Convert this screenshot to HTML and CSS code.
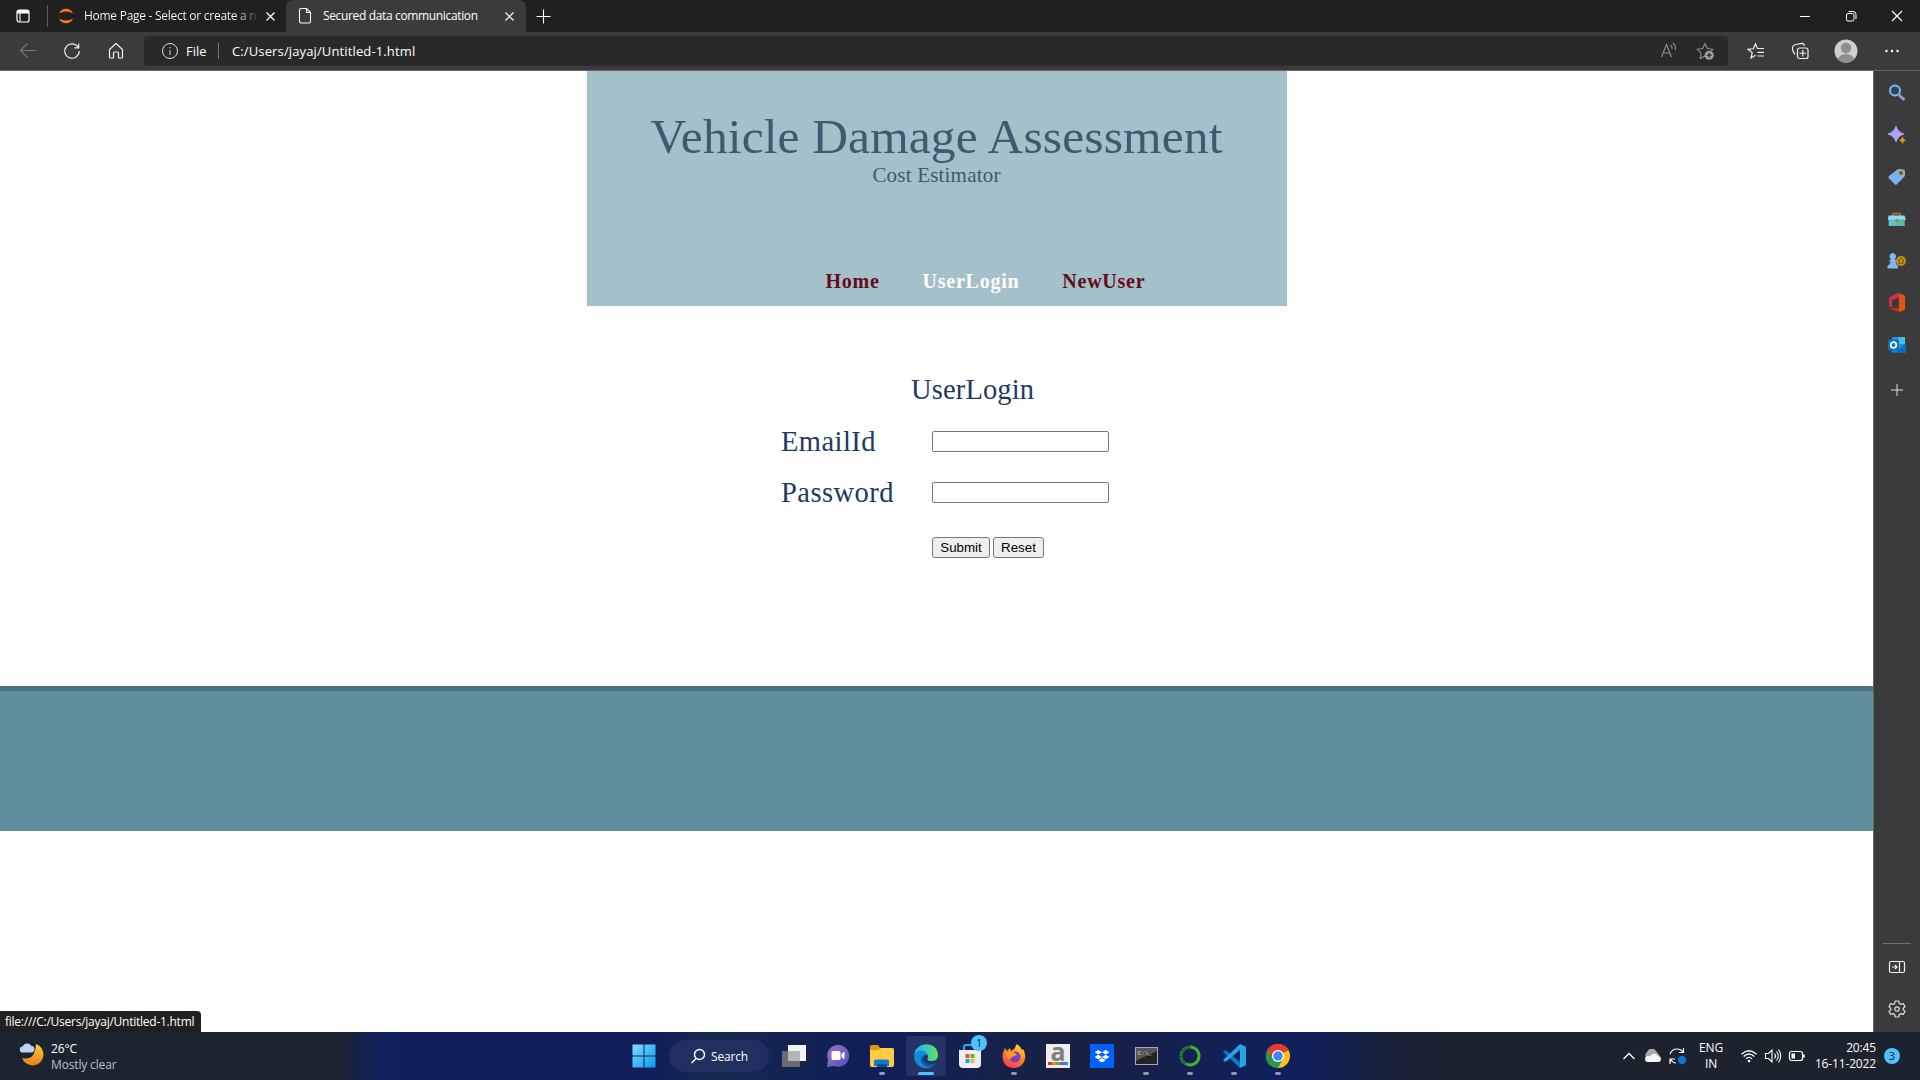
FILE: index.html
```html
<!DOCTYPE html>
<html lang="en">
<head>
<meta charset="utf-8">
<title>Secured data communication</title>
<link rel="stylesheet" href="styles.css">
</head>
<body>
<header class="tabs">
  <div class="tab-actions"><svg width="16" height="16" viewBox="0 0 16 16"><rect x="1" y="2" width="12" height="12" rx="2" fill="none" stroke="#fff" stroke-width="1.200"/><path d="M1 5.500V4q0-2 2-2h8q2 0 2 2v1.500z" fill="#fff"/><path d="M4 5v9" stroke="#fff"/></svg></div>
  <div class="tab tab-first">
    <svg width="18" height="18" viewBox="0 0 18 18"><path d="M2 6.500Q4 1.800 9 1.800T16 6.500Q9 2.500 2 6.500M2 11.500Q4 16.200 9 16.200T16 11.500Q9 15.500 2 11.500" fill="#f37726"/></svg>
    <span class="tab-title faded">Home Page - Select or create a n</span>
    <svg class="close" width="9" height="9" viewBox="0 0 9 9"><path d="M.5.5l8 8M8.500.5l-8 8" stroke="#fff" stroke-width="1.200"/></svg>
  </div>
  <div class="tab tab-active">
    <svg width="14" height="18" viewBox="0 0 14 18"><path d="M3 1.500h5.500L12.500 5.500V14.500q0 1.500-1.500 1.500H3q-1.500 0-1.500-1.500V3q0-1.500 1.500-1.500zM8.500 1.500v4h4" fill="none" stroke="#fff" stroke-width="1.100"/></svg>
    <span class="tab-title active-title">Secured data communication</span>
    <svg class="close" width="9" height="9" viewBox="0 0 9 9"><path d="M.5.5l8 8M8.500.5l-8 8" stroke="#fff" stroke-width="1.200"/></svg>
  </div>
  <svg class="new-tab" width="15" height="15" viewBox="0 0 15 15"><path d="M7.500.5v14M.5 7.500h14" stroke="#fff" stroke-width="1.100"/></svg>
  <div class="window-buttons">
    <svg width="12" height="12" viewBox="0 0 12 12"><path d="M1 6.500h10" stroke="#fff"/></svg>
    <svg width="12" height="12" viewBox="0 0 12 12"><rect x="1.500" y="3.500" width="7.500" height="7.500" rx="1.500" fill="none" stroke="#fff"/><path d="M3.500 1.500H8q3 0 3 3V9" fill="none" stroke="#fff"/></svg>
    <svg width="12" height="12" viewBox="0 0 12 12"><path d="M1 1l10 10M11 1L1 11" stroke="#fff" stroke-width="1.200"/></svg>
  </div>
</header>
<nav class="toolbar">
  <div class="nav-buttons">
    <svg width="18" height="18" viewBox="0 0 18 18"><path d="M17 8.500H2M8.500 1.500l-7 7 7 7" fill="none" stroke="#777" stroke-width="1.100"/></svg>
    <svg width="18" height="18" viewBox="0 0 18 18"><path d="M15.300 5.500A7.200 7.200 0 1 0 16.200 9M15.700 1.500v4.300h-4.300" fill="none" stroke="#eee" stroke-width="1.200"/></svg>
    <svg width="18" height="18" viewBox="0 0 18 18"><path d="M2.500 7.500L9 1.500l6.500 6v7.500q0 1-1 1h-3v-5q0-1-1-1h-3q-1 0-1 1v5h-3q-1 0-1-1z" fill="none" stroke="#eee" stroke-width="1.200" stroke-linejoin="round"/></svg>
  </div>
  <div class="address">
    <svg width="18" height="18" viewBox="0 0 18 18"><circle cx="9" cy="9" r="7.500" fill="none" stroke="#ddd"/><path d="M9 8v5M9 5v1.400" stroke="#ddd"/></svg>
    <span class="scheme">File</span><i class="address-line"></i><span class="url">C:/Users/jayaj/Untitled-1.html</span>
    <div class="address-icons">
      <svg width="18" height="18" viewBox="0 0 18 18"><path d="M1.500 15L6.500 2.500 11.500 15M3 11h7M10.500 3q2 1.500 1.500 4M12.800 1q3.200 2.500 2.500 7" fill="none" stroke="#929292" stroke-width="1.100"/></svg>
      <svg width="18" height="18" viewBox="0 0 18 18"><path d="M9 14l-4.800 2.500 1-5.300L1.300 7.300l5.300-.7L9 1.800l2.400 4.800 5.300.7-1.500 1.500" fill="none" stroke="#929292" stroke-width="1.100"/><circle cx="13.200" cy="13.200" r="4.500" fill="#a0a0a0"/><path d="M13.200 10.700v5M10.700 13.200h5" stroke="#292929" stroke-width="1.200"/></svg>
    </div>
  </div>
  <svg class="favorites" width="18" height="18" viewBox="0 0 18 18"><path d="M8.500 13.200L4 16l1.200-5.200L1 7.300l5.300-.5L8.500 1.800l2 4.700h6.500M10.500 10.300H17M10.500 14H17" fill="none" stroke="#eee" stroke-width="1.200"/></svg>
  <svg class="collections" width="18" height="18" viewBox="0 0 18 18"><rect x="6.500" y="6" width="10.500" height="10.500" rx="2" fill="none" stroke="#eee" stroke-width="1.200"/><path d="M11.750 8v6.500M8.500 11.250H15M4 12.500Q1 8 1.500 5.500T5 2.500l6-1.200q2 0 2.500 2.500" fill="none" stroke="#eee" stroke-width="1.200"/></svg>
  <svg class="profile" width="24" height="24" viewBox="0 0 24 24"><clipPath id="face"><circle cx="12" cy="12" r="11.500"/></clipPath><g clip-path="url(#face)"><path fill="#d0cecc" d="M0 0h24v24H0z"/><circle cx="12" cy="9" r="5.200" fill="#918d8a"/><ellipse cx="12" cy="21" rx="8.200" ry="6" fill="#918d8a"/></g></svg>
  <svg class="more" width="16" height="4" viewBox="0 0 16 4"><g fill="#fff"><circle cx="2.500" cy="2" r="1.200"/><circle cx="8" cy="2" r="1.200"/><circle cx="13.500" cy="2" r="1.200"/></g></svg>
</nav>
<div class="workspace">
  <main class="page">
    <header class="banner">
      <h1>Vehicle Damage Assessment</h1>
      <p>Cost Estimator</p>
      <nav class="menu"><a>Home</a><a class="current">UserLogin</a><a>NewUser</a></nav>
    </header>
    <form class="login">
      <h2>UserLogin</h2>
      <label for="email">EmailId</label><input id="email" type="text">
      <label for="pass">Password</label><input id="pass" type="password">
      <div class="form-buttons"><button class="submit" type="button">Submit</button><button class="reset" type="button">Reset</button></div>
    </form>
    <footer class="page-footer"></footer>
    <div class="status">file:///C:/Users/jayaj/Untitled-1.html</div>
  </main>
  <aside class="sidebar">
    <svg width="20" height="20" viewBox="0 0 20 20"><path d="M12 12l5.500 5" stroke="#b38ddd" stroke-width="3"/><circle cx="8" cy="7.500" r="5" fill="#344354" stroke="#79b8f5" stroke-width="2"/></svg>
    <svg width="20" height="20" viewBox="0 0 20 20"><defs><linearGradient id="spark"><stop stop-color="#8bb9ff"/><stop offset="1" stop-color="#d28bea"/></linearGradient></defs><path d="M9 1q1.800 6.200 8 8-6.200 1.800-8 8-1.800-6.200-8-8 6.200-1.800 8-8z" fill="url(#spark)" stroke="url(#spark)" stroke-width=".8" stroke-linejoin="round"/><path d="M15.500 11.500q.9 2.900 3.500 3.800-2.600.8-3.500 3.700-.9-2.900-3.500-3.700 2.600-.9 3.500-3.800z" fill="#d89b17"/></svg>
    <svg width="20" height="20" viewBox="0 0 20 20"><path d="M2 9l8-6.200q1-.8 2-.7l4.500.4q1.500.2 1.500 1.700V8q0 1-.7 1.800L10 17.200q-1.200 1-2.300 0L2 11.500Q.8 10 2 9z" fill="#79b2f1"/><circle cx="14" cy="6" r="1.800" fill="#4b432f" stroke="#c47b16" stroke-width="1.300"/></svg>
    <svg width="20" height="20" viewBox="0 0 20 20"><defs><linearGradient id="box"><stop stop-color="#55c9e3"/><stop offset="1" stop-color="#56bd8e"/></linearGradient></defs><path d="M6 7V4.500h7V7" fill="none" stroke="#af7b15" stroke-width="1.600"/><path d="M1.500 6.500h16L19 11H1z" fill="#8dd9ff"/><path d="M1.700 10.500h16V17h-16z" fill="url(#box)"/><circle cx="10" cy="11.500" r="1.800" fill="#bd861a"/></svg>
    <svg width="20" height="20" viewBox="0 0 20 20"><circle cx="14" cy="10" r="5" fill="#c88c1b"/><g fill="#624612"><circle cx="14" cy="7.500" r=".9"/><circle cx="11.700" cy="9.500" r=".9"/><circle cx="16.300" cy="9.500" r=".9"/><circle cx="12.700" cy="12" r=".9"/><circle cx="15.500" cy="12" r=".9"/></g><path d="M2.500 9H4L3 7a3.200 3.200 0 1 1 5.500 0L8 9h1.500v1.500H8.500l1 3L11 15v2.500H.5V15L2.500 13.500l1-3h-1z" fill="#80b7ed"/></svg>
    <svg width="20" height="22" viewBox="0 0 20 22"><path d="M11 1L3.500 4.500Q2 5.300 2 7v7l3 2V8l7-2.500z" fill="#d02f50"/><path d="M11 1l6 2q1 .5 1 1.500v12q0 1.200-1 1.700L12 20V5z" fill="#e7530c"/><path d="M3 17l2-1 7 .5V20z" fill="#c92c18"/></svg>
    <svg width="20" height="20" viewBox="0 0 20 20"><path d="M5 2h13v15H5z" fill="#1f91de"/><path d="M11 2h7v7h-7z" fill="#4abbed"/><path d="M4 16l14-7v8.500H5z" fill="#1786d7"/><path d="M19 9v9H8z" fill="#0c6cb5"/><rect x="1" y="4.500" width="11" height="11" rx="1" fill="#0872c6"/><circle cx="6.500" cy="10" r="2.800" fill="none" stroke="#fff" stroke-width="1.700"/></svg>
    <svg class="add" width="14" height="14" viewBox="0 0 14 14"><path d="M7 1v12M1 7h12" stroke="#ddd"/></svg>
    <div class="sidebar-end">
      <svg width="18" height="14" viewBox="0 0 18 14"><rect x="1.500" y="1.500" width="15" height="11" rx="1.500" fill="none" stroke="#eee" stroke-width="1.200"/><path d="M11.500 1v12M4 7h5M7 5l2 2-2 2" fill="none" stroke="#eee" stroke-width="1.200"/></svg>
      <svg width="18" height="18" viewBox="0 0 18 18"><path d="M7.300 1h3.400l.7 2.600 1.300.7 2.600-.7L17 6.500l-1.800 1.800v1.400L17 11.500l-1.700 2.900-2.600-.7-1.300.7-.7 2.600H7.300l-.7-2.600-1.300-.7-2.600.7L1 11.500l1.800-1.800V8.300L1 6.500l1.700-2.900 2.600.7 1.300-.7z" fill="none" stroke="#ddd" stroke-width="1.200" stroke-linejoin="round"/><circle cx="9" cy="9" r="2.200" fill="none" stroke="#ddd" stroke-width="1.200"/></svg>
    </div>
  </aside>
</div>
<footer class="taskbar">
  <div class="weather">
    <svg width="26" height="26" viewBox="0 0 26 26"><defs><linearGradient id="moon" x2="0" y2="1"><stop stop-color="#ffd136"/><stop offset="1" stop-color="#ef7c1c"/></linearGradient></defs><path d="M17 2a11 11 0 1 1-14 14Q11 18 14.500 12.500 17 8 17 2z" fill="url(#moon)"/><path d="M4 10.500a3 3 0 0 1-.4-6A5 5 0 0 1 12.500 4a3.300 3.300 0 0 1 .5 6.500z" fill="#bfd1f4"/></svg>
    <div><b>26°C</b><span>Mostly clear</span></div>
  </div>
  <div class="apps">
    <div class="app start"><svg width="24" height="24" viewBox="0 0 24 24"><defs><linearGradient id="win" x2="1" y2="1"><stop stop-color="#80ddff"/><stop offset="1" stop-color="#0798ed"/></linearGradient></defs><path d="M.5.5h11v11H.5zM12.500.5h11v11h-11zM.5 12.500h11v11H.5zM12.500 12.500h11v11h-11z" fill="url(#win)"/></svg></div>
    <div class="search"><svg width="16" height="16" viewBox="0 0 16 16"><circle cx="9.500" cy="6.500" r="5" fill="none" stroke="#fff" stroke-width="1.500"/><path d="M6 10.500L1.500 15" stroke="#fff" stroke-width="1.500"/></svg><span>Search</span></div>
    <div class="app"><svg width="26" height="24" viewBox="0 0 26 24"><path d="M7 1h18v16H7z" fill="#f3f3f3"/><path d="M1 7h18v16H1z" fill="#6c6c70"/><path d="M7 7h12v10H7z" fill="#b5b5b7"/></svg></div>
    <div class="app"><svg width="24" height="24" viewBox="0 0 24 24"><defs><linearGradient id="chat" x2="1" y2="1"><stop stop-color="#9b72b9"/><stop offset="1" stop-color="#4e53c8"/></linearGradient></defs><path d="M1 23l1-7A11 11 0 1 1 8 22z" fill="url(#chat)"/><rect x="5.500" y="7" width="9" height="9" rx="1.500" fill="#fff"/><path d="M15.500 10l3-2.500v8l-3-2.500z" fill="#fff"/></svg></div>
    <div class="app running"><svg width="26" height="24" viewBox="0 0 26 24"><path d="M1 3q0-2 2-2h6l2 3h12q2 0 2 2v4H1z" fill="#df980e"/><path d="M1 6h8l3-2h11q2 0 2 2v15q0 2-2 2H3q-2 0-2-2z" fill="#ffcd42"/><path d="M5 22v-5q0-1.500 2-1.500h11q2 0 2 1.500v5z" fill="#117cc6"/><path d="M8 20h10v3H8z" fill="#075391"/></svg></div>
    <div class="app active"><svg width="26" height="26" viewBox="0 0 26 26"><defs><linearGradient id="edge"><stop stop-color="#27a9e4"/><stop offset=".5" stop-color="#35c9c4"/><stop offset="1" stop-color="#70df49"/></linearGradient></defs><path d="M1 13C2-3 25-2 25 12q0 6-7 6c-4 0-4-2-3-4 1-4-8-8-14-1z" fill="url(#edge)"/><path d="M1 13C3 6 12 6 15 12q-5-1-5 4c0 5 6 9 13 4-7 10-22 5-22-7z" fill="#1689d6"/><path d="M10 11q-5 7 2 12 6 3 11-3-7 3-11-1-4-4-2-8z" fill="#0b57a8"/></svg></div>
    <div class="app"><svg width="26" height="26" viewBox="0 0 26 26"><path d="M7 8V4q0-2 2-2h7q2 0 2 2v4" fill="none" stroke="#21b0ee" stroke-width="2"/><path d="M2 7h22v14q0 4-4 4H6q-4 0-4-4z" fill="#eee"/><path d="M8.500 11h4v4h-4z" fill="#ef5528"/><path d="M13.500 11h4v4h-4z" fill="#77af24"/><path d="M8.500 16h4v4h-4z" fill="#18a3df"/><path d="M13.500 16h4v4h-4z" fill="#f5b724"/></svg><em class="store-badge">1</em></div>
    <div class="app running"><svg width="26" height="26" viewBox="0 0 26 26"><defs><linearGradient id="fox" x1=".8" x2=".3" y2="1"><stop stop-color="#ffe13c"/><stop offset=".5" stop-color="#ff841f"/><stop offset="1" stop-color="#f83461"/></linearGradient></defs><path d="M16 1q4 3 5 6l1-1c5 8 1 18-8 19C4 26 0 17 2 10l2-5 2 3 3-3 1 3q2-1 4-3 0-2 2-4z" fill="url(#fox)"/><circle cx="14" cy="14" r="5.500" fill="#7f3dc0"/><path d="M5 11q4-4 9-1l2 2-3 1q-3 1-4 3-4-1-4-5z" fill="#ff9d20"/></svg></div>
    <div class="app"><div class="amazon"><span>a</span><i></i></div></div>
    <div class="app"><svg width="24" height="24" viewBox="0 0 24 24"><path fill="#0061fe" d="M0 0h24v24H0z"/><path d="M8.300 6l3.700 2.300-3.700 2.300-3.700-2.300zM15.700 6l3.700 2.300-3.700 2.300L12 8.300zM8.300 10.700L12 13l-3.700 2.300L4.600 13zM15.700 10.700l3.700 2.300-3.700 2.300L12 13zM12 14l3.700 2.200L12 18.500l-3.700-2.300z" fill="#fff"/></svg></div>
    <div class="app running"><div class="terminal">C:\_</div></div>
    <div class="app running"><svg width="24" height="24" viewBox="0 0 24 24"><path d="M13 3a9 9 0 1 1-5 17" fill="none" stroke="#42b229" stroke-width="3"/><path d="M13 3A9 9 0 0 0 8 20" fill="none" stroke="#348f2e" stroke-width="3.200" stroke-dasharray="1.600 .7"/></svg></div>
    <div class="app running"><svg width="26" height="26" viewBox="0 0 26 26"><path d="M19 1l6 3v18l-6 3L2 9l2.500-2L19 19z" fill="#087bc5"/><path d="M19 1l6 3v18l-6 3V7L4.500 19 2 17z" fill="#25a3e8"/></svg></div>
    <div class="app running"><svg width="26" height="26" viewBox="0 0 26 26"><circle cx="13" cy="13" r="12" fill="#fbc116"/><path d="M13 13L2.600 7A12 12 0 0 1 23.400 7z" fill="#e33b2e"/><path d="M2.600 7A12 12 0 0 0 13 25l5-9-5 1-5-1z" fill="#219950"/><path d="M13 7.500h10.600A12 12 0 0 0 2.600 7L8 16z" fill="#e33b2e"/><circle cx="13" cy="13" r="6" fill="#fff"/><circle cx="13" cy="13" r="4.700" fill="#3f83ed"/></svg></div>
  </div>
  <div class="tray">
    <svg width="14" height="10" viewBox="0 0 14 10"><path d="M1.500 8L7 2.500 12.500 8" fill="none" stroke="#fff" stroke-width="1.300"/></svg>
    <svg width="18" height="14" viewBox="0 0 18 14"><path d="M4 10a4 4 0 0 1-1-7 5 5 0 0 1 9-1l4 5z" fill="#aaa"/><path d="M4 13a3 3 0 0 1 0-6q1 0 2 .5A4.500 4.500 0 0 1 14 7a3 3 0 0 1 0 6z" fill="#f7f7f7"/></svg>
    <svg width="20" height="18" viewBox="0 0 20 18"><path d="M2 7Q4 2 9 2q4 0 6 3M15.500 1v4.500H11M2 17v-5h5M2.500 12.500Q5 16 8 16" fill="none" stroke="#fff" stroke-width="1.200"/><circle cx="14" cy="13" r="4.200" fill="#0875d7"/></svg>
    <div class="language">ENG<br>IN</div>
    <svg width="18" height="14" viewBox="0 0 18 14"><path d="M1.500 5.200q7.500-7 15 0M3.700 7.500q5.300-5 10.600 0M6 9.800q3-2.800 6 0" fill="none" stroke="#fff" stroke-width="1.300"/><circle cx="9" cy="12" r="1.300" fill="#fff"/></svg>
    <svg width="18" height="16" viewBox="0 0 18 16"><path d="M1.500 5.500h3L8 2v12l-3.500-3.500h-3zM10.500 5.500q2 2.500 0 5M12.500 3.500q3.500 4.500 0 9M14.500 1.500q4.500 6.500 0 13" fill="none" stroke="#fff" stroke-width="1.100"/></svg>
    <svg width="18" height="12" viewBox="0 0 18 12"><rect x="1.500" y="1.500" width="13" height="9" rx="2" fill="none" stroke="#fff" stroke-width="1.200"/><path d="M3.500 3.500H7v5H3.500zM15 4.500h1.700v3H15z" fill="#fff"/></svg>
    <div class="clock">20:45<br>16-11-2022</div>
    <em class="notice">3</em>
  </div>
</footer>
</body>
</html>
```
FILE: styles.css
```css
* { box-sizing: border-box; }
body { margin: 0; width: 1920px; height: 1080px; overflow: hidden; display: flex; flex-direction: column; background: #fff; font: 12px "Open Sans", "Noto Sans", sans-serif; color: #fff; }
svg { display: block; flex: none; }
em { font-style: normal; }
.tabs { height: 32px; flex: none; display: flex; align-items: center; background: #202020; }
.tab-actions { width: 48px; height: 22px; display: flex; align-items: center; padding-left: 16px; border-right: 1px solid #5b5b5b; }
.tab { height: 32px; display: flex; align-items: center; }
.tab-first { width: 238px; padding: 0 11px 0 9px; }
.tab-title { white-space: nowrap; line-height: 32px; }
.faded { width: 174px; margin-left: 9px; overflow: hidden; letter-spacing: -.27px; background: linear-gradient(90deg, #fff 88%, #333 100%); background-clip: text; color: transparent; }
.close { margin-left: auto; }
.tab-active { width: 240px; padding: 0 12px 0 12px; background: #3b3b3b; border-radius: 7px 7px 0 0; }
.active-title { margin-left: 11px; letter-spacing: -.35px; }
.new-tab { margin-left: 10px; }
.window-buttons { display: flex; gap: 34px; margin-left: auto; padding-right: 17px; }
.toolbar { height: 39px; flex: none; display: flex; align-items: center; background: #3b3b3b; border-bottom: 1px solid #666; }
.nav-buttons { width: 144px; display: flex; gap: 26px; padding-left: 19px; }
.address { width: 1584px; height: 30px; display: flex; align-items: center; padding: 0 14px 0 17px; background: #292929; border-radius: 4px; font-size: 13px; }
.scheme { width: 32px; margin-left: 7px; }
.address-line { width: 1px; height: 16px; background: #777; }
.url { margin-left: 13px; letter-spacing: .13px; }
.address-icons { display: flex; gap: 18px; margin-left: auto; }
.favorites { margin-left: 19px; }
.collections { margin-left: 26px; }
.profile { margin-left: 25px; }
.more { margin-left: 26px; }
.workspace { height: 961px; flex: none; display: flex; background: #3b3b3b; }
.page { position: relative; width: 1873px; background: #fff; font-family: "Liberation Serif", serif; }
.banner { width: 700px; height: 235px; margin: 0 auto; padding-top: 38px; background: #a4c0c8; color: #40596f; text-align: center; }
.banner h1 { margin: 0; font-size: 49.5px; font-weight: 400; line-height: 56px; letter-spacing: .12px; white-space: nowrap; }
.banner p { margin: -1px 0 0; font-size: 21px; line-height: 22px; letter-spacing: .2px; }
.menu { display: flex; gap: 43px; padding: 84px 0 0 239px; font-size: 20px; font-weight: 700; line-height: 22px; letter-spacing: .75px; color: #620c1e; }
.menu .current { color: #fff; }
.login { display: grid; grid-template-columns: 151px 177px; grid-template-rows: 52px 51px 51px 59px; width: 328px; height: 380px; margin-left: 781px; padding-top: 58px; align-items: center; align-content: start; color: #203a61; font-size: 28.5px; letter-spacing: .45px; }
.login h2 { grid-column: 1 / 3; margin: 0; padding-left: 130px; font-size: 28.5px; font-weight: 400; letter-spacing: .15px; }
.login input { width: 177px; height: 21px; margin: 0 0 1px; padding: 1px 2px; border: 1px solid #767676; border-radius: 2px; background: #fff; }
.form-buttons { grid-column: 2; display: flex; gap: 3px; }
.form-buttons button { height: 21px; padding: 0; background: #efefef; border: 1px solid #767676; border-radius: 3px; color: #000; font: 13.333px "Liberation Sans", sans-serif; }
.submit { width: 58px; }
.reset { width: 51px; }
.page-footer { height: 145px; background: #60909e; border-top: 5px solid #4d747d; }
.status { position: absolute; left: 0; bottom: 0; width: 201px; height: 21px; padding-left: 5px; background: #202020; border-radius: 0 4px 0 0; color: #fff; font: 12px/22px "Open Sans", sans-serif; letter-spacing: -.25px; white-space: nowrap; }
.sidebar { width: 47px; display: flex; flex-direction: column; align-items: center; gap: 22px; padding-top: 12px; border-left: 1px solid #666; background: #3b3b3b; }
.sidebar svg:nth-child(6) { margin: -1px 0; }
.sidebar .add { margin-top: 6px; }
.sidebar-end { width: 28px; margin-top: auto; margin-bottom: 14px; display: flex; flex-direction: column; align-items: center; gap: 26px; padding-top: 16px; border-top: 1px solid #707070; }
.taskbar { height: 48px; flex: none; display: flex; background: linear-gradient(90deg, #1c2430 0, #1c2430 340px, #11215b 375px, #111f5b 650px, #14284d 710px, #111e59 880px, #17224a 990px, #182044 1060px, #11205a 1270px, #11205a 1310px, #192238 1390px, #1c222e 1450px); }
.weather { width: 623px; display: flex; padding: 10px 0 0 19px; }
.weather div { display: flex; flex-direction: column; margin: -1px 0 0 6px; line-height: 16px; letter-spacing: -.15px; }
.weather b { font-weight: 400; }
.weather span { color: #bbc0c7; }
.apps { width: 677px; display: flex; align-items: center; gap: 4px; }
.app { position: relative; width: 40px; height: 40px; flex: none; display: flex; align-items: center; justify-content: center; }
.start { left: 1px; }
.search { width: 100px; height: 32px; display: flex; align-items: center; justify-content: center; gap: 5px; margin: 0 0 0 2px; background: #222f61; border-radius: 16px; }
.search + .app { margin-left: 1px; }
.search span { letter-spacing: -.2px; }
.active { background: #263365; border-radius: 4px; }
.running::after, .active::after { content: ""; position: absolute; bottom: 1px; width: 6px; height: 3px; border-radius: 2px; background: #9599ae; }
.active::after { width: 16px; background: #4cc2ff; }
.store-badge { position: absolute; right: 3px; top: -1px; width: 16px; height: 16px; border-radius: 50%; background: #4cc2ff; color: #102030; font-size: 10px; line-height: 16px; text-align: center; }
.amazon { width: 24px; height: 24px; background: #eee; color: #808080; text-align: center; font: 700 25px/14px "Open Sans", sans-serif; }
.amazon span { display: block; height: 18px; }
.amazon i { display: block; height: 3px; margin: 0 2px; background: linear-gradient(90deg, #e23b34 20%, #f48a21 20% 40%, #53ac46 40% 60%, #974ac5 60% 80%, #218ddb 80%); }
.terminal { width: 23px; height: 18px; padding: 2px; border: 1px solid #aaa; background: linear-gradient(155deg, #555 50%, #222 50%); color: #ddd; font: 6px/7px "Liberation Mono", monospace; }
.tray { margin-left: auto; width: 300px; display: flex; align-items: center; padding: 0 0 1px 2px; }
.tray svg + svg { margin-left: 6px; }
.tray svg:nth-child(2) { margin-left: 8px; }
.language { width: 28px; margin: 1px 15px 0 9px; text-align: center; line-height: 16px; letter-spacing: -.2px; }
.clock { width: 70px; text-align: right; line-height: 16px; letter-spacing: -.4px; }
.clock { letter-spacing: -.15px; }
.notice { width: 16px; height: 16px; margin-left: 8px; border-radius: 50%; background: #4cc2ff; color: #111; font-size: 11px; line-height: 16px; text-align: center; }
```
